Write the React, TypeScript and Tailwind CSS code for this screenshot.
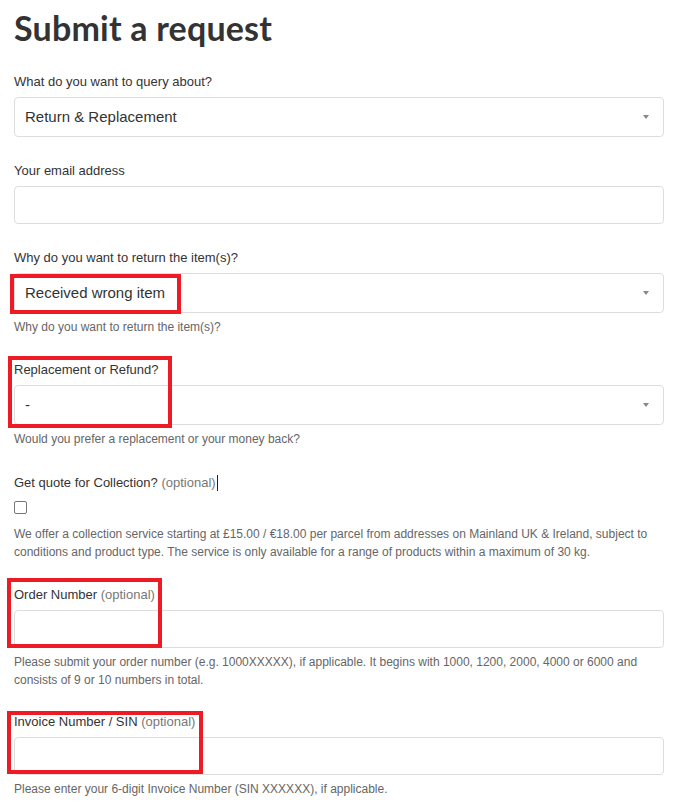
import React from 'react'

const sans = { fontFamily: '"Liberation Sans", Arial, sans-serif' }

function Label({ text, optional, cursor }: { text: string; optional?: boolean; cursor?: boolean }) {
  return (
    <div className="text-[13px] leading-[18px] text-[#333] mb-[6px]">
      {text}
      {optional && <span className="text-[#777]"> (optional)</span>}
      {cursor && <span className="inline-block align-middle w-0 h-[16px] border-l border-[#222] ml-[1px] -mt-[2px]" />}
    </div>
  )
}

function Hint({ children }: { children: React.ReactNode }) {
  return <p className="mt-[5px] text-[12px] leading-[18px] text-[#666]">{children}</p>
}

function Select({ value }: { value: string }) {
  return (
    <div className="h-[40px] rounded-[4px] border border-[#ddd] bg-white flex items-center justify-between pl-[10px] pr-[14px]">
      <span className="text-[15px] text-[#333]">{value}</span>
      <span className="w-0 h-0 border-l-[3px] border-r-[3px] border-t-[4px] border-l-transparent border-r-transparent border-t-[#888]" />
    </div>
  )
}

function Input() {
  return <div className="h-[38px] rounded-[4px] border border-[#ddd] bg-white" />
}

function Mark({ className }: { className: string }) {
  return <div className={`absolute border-[4px] border-[#ed1c24] pointer-events-none ${className}`} />
}

export default function App() {
  return (
    <div className="bg-white min-h-[810px] pl-[14px] pr-[15px]" style={sans}>
      <h1
        className="pt-[8px] text-[34px] leading-[40px] font-bold tracking-[0.2px] text-[#333] mb-[25px]"
        style={{ fontFamily: 'Lato, "Open Sans", sans-serif' }}
      >
        Submit a request
      </h1>

      <div className="mb-[25px]">
        <Label text="What do you want to query about?" />
        <Select value="Return & Replacement" />
      </div>

      <div className="mb-[25px]">
        <Label text="Your email address" />
        <Input />
      </div>

      <div className="mb-[25px]">
        <Label text="Why do you want to return the item(s)?" />
        <div className="relative">
          <Select value="Received wrong item" />
          <Mark className="-left-[4px] top-[1px] w-[171px] h-[40px]" />
        </div>
        <Hint>Why do you want to return the item(s)?</Hint>
      </div>

      <div className="relative mb-[26px]">
        <Label text="Replacement or Refund?" />
        <Select value="-" />
        <Hint>Would you prefer a replacement or your money back?</Hint>
        <Mark className="-left-[6px] -top-[5px] w-[164px] h-[72px]" />
      </div>

      <div className="mb-[25px]">
        <Label text="Get quote for Collection?" optional cursor />
        <div className="mt-[9px] mb-[11px] flex">
          <span className="w-[13px] h-[13px] rounded-[2px] border border-[#767676] bg-white" />
        </div>
        <p className="text-[12px] leading-[18px] text-[#666]">
          We offer a collection service starting at £15.00 / €18.00 per parcel from addresses on Mainland UK &amp; Ireland, subject to conditions and product type. The service is only available for a range of products within a maximum of 30 kg.
        </p>
      </div>

      <div className="relative mb-[24px]">
        <Label text="Order Number" optional />
        <Input />
        <Hint>
          Please submit your order number (e.g. 1000XXXXX), if applicable. It begins with 1000, 1200, 2000, 4000 or 6000 and consists of 9 or 10 numbers in total.
        </Hint>
        <Mark className="-left-[7px] -top-[8px] w-[155px] h-[70px]" />
      </div>

      <div className="relative">
        <Label text="Invoice Number / SIN" optional />
        <Input />
        <Hint>Please enter your 6-digit Invoice Number (SIN XXXXXX), if applicable.</Hint>
        <Mark className="-left-[7px] -top-[2px] w-[196px] h-[63px]" />
      </div>
    </div>
  )
}
